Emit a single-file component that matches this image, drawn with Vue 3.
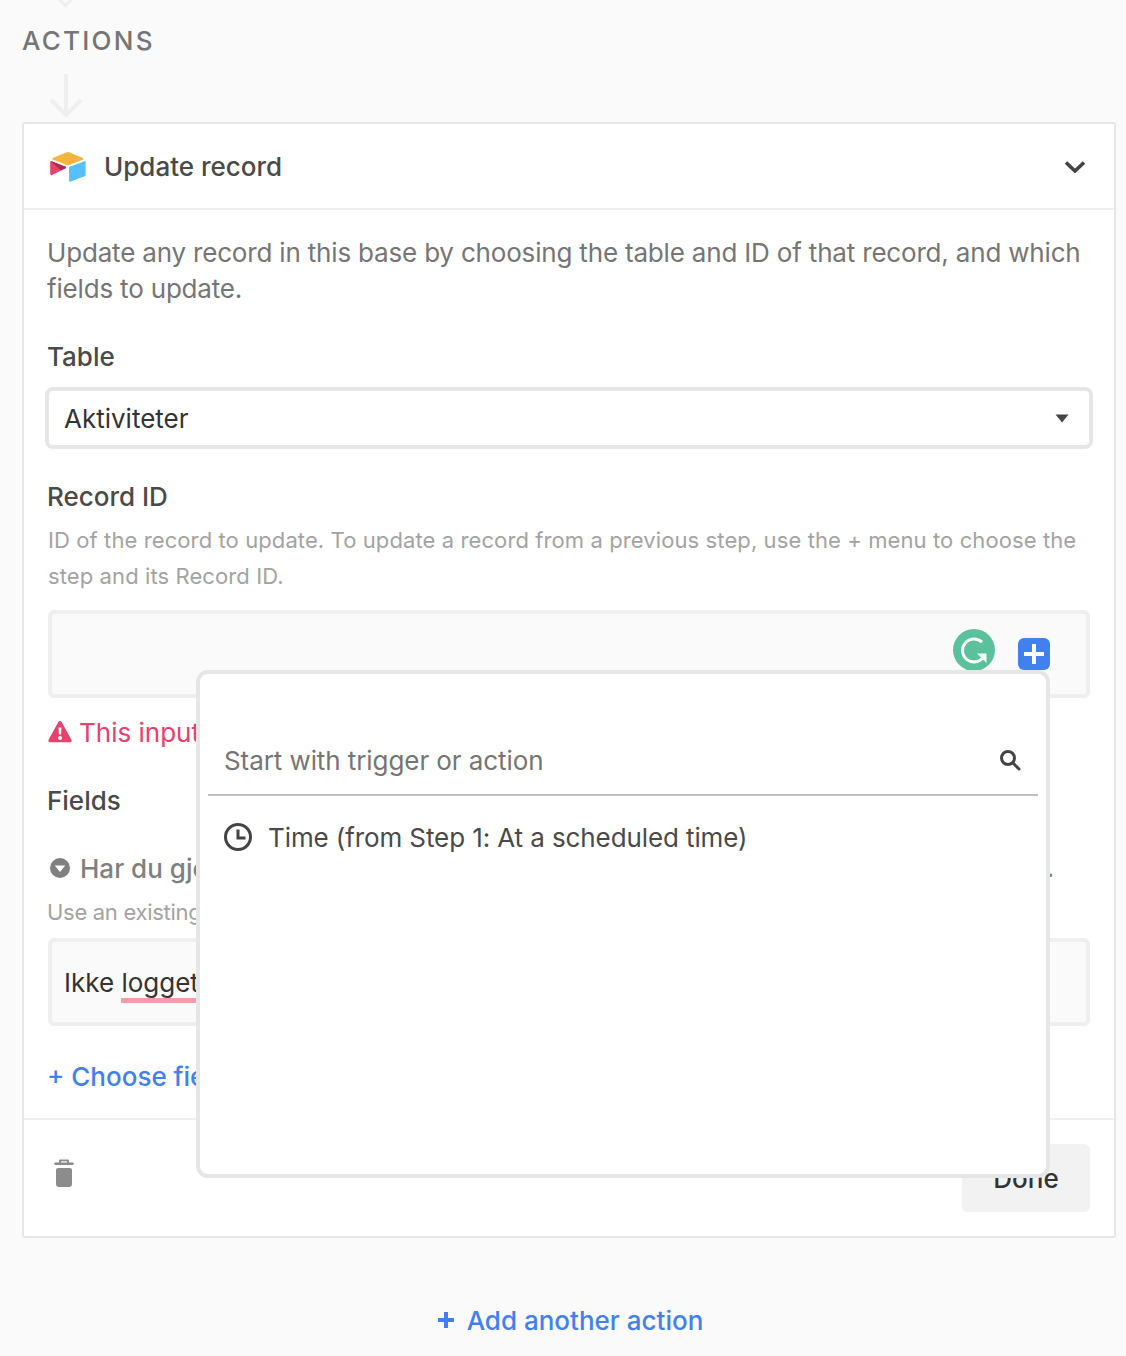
<script setup>
const helpText = 'ID of the record to update. To update a record from a previous step, use the + menu to choose the step and its Record ID.'
</script>

<template>
  <div class="page">
    <div class="stub"></div>
    <h2 class="section">ACTIONS</h2>
    <svg class="arrow" width="34" height="44" viewBox="0 0 34 44" fill="none" stroke="#efefef" stroke-width="4">
      <path d="M17 0V41M2 26L17 41L32 26" />
    </svg>

    <section class="card">
      <header class="card-head">
        <svg class="logo" width="40" height="34" viewBox="0 0 200 170">
          <path fill="#f4b43d" d="M90.039 12.368 24.079 39.66c-3.667 1.519-3.63 6.729.062 8.192l66.235 26.266a24.58 24.58 0 0 0 18.12 0l66.236-26.266c3.69-1.463 3.729-6.673.062-8.192l-65.96-27.292a24.58 24.58 0 0 0-18.795 0" />
          <path fill="#56c0ff" d="M105.312 88.46v65.617c0 3.12 3.147 5.258 6.048 4.108l73.806-28.648a4.42 4.42 0 0 0 2.79-4.108V59.813c0-3.121-3.147-5.258-6.048-4.108l-73.806 28.648a4.42 4.42 0 0 0-2.79 4.108" />
          <path fill="#e8416b" d="M88.078 91.846 17.712 125.651c-2.93 1.414-6.672-.722-6.672-3.978V60.088c0-1.178.604-2.195 1.414-2.96a5 5 0 0 1 1.12-.84c1.104-.663 2.68-.84 4.02-.31L87.71 83.76c3.564 1.413 3.844 6.408.368 8.087" />
          <path fill="#b02a4f" d="M88.078 91.846 65.358 102.818 13.574 56.288c1.104-.663 2.68-.84 4.02-.31L87.71 83.76c3.564 1.413 3.844 6.408.368 8.087" />
        </svg>
        <span class="card-title">Update record</span>
        <svg class="chev" width="22" height="14" viewBox="0 0 22 14" fill="none" stroke="#444" stroke-width="3.6">
          <path d="M2 3.500L11 12L20 3.500" />
        </svg>
      </header>

      <div class="card-body">
        <p class="desc">Update any record in this base by choosing the table and ID of that record, and which fields to update.</p>

        <div class="label table-label">Table</div>
        <div class="select">
          <span>Aktiviteter</span>
          <svg width="14" height="9" viewBox="0 0 14 9"><path fill="#444" d="M0.5 0.5H13.5L7 8.5Z" /></svg>
        </div>

        <div class="label record-label">Record ID</div>
        <p class="help">{{ helpText }}</p>
        <div class="input record-input"></div>

        <div class="error">
          <svg width="24" height="22" viewBox="0 0 24 22">
            <path fill="#e8416b" fill-rule="evenodd" d="M10.2 1.2a2 2 0 0 1 3.6 0l9.6 17.6a1.6 1.6 0 0 1-1.4 2.4H2a1.6 1.6 0 0 1-1.4-2.4ZM10.6 6.5l.3 7h2.2l.3-7ZM12 15a2 2 0 1 0 0 4 2 2 0 0 0 0-4Z" />
          </svg>
          <span>This input is required</span>
        </div>

        <div class="label fields-label">Fields</div>
        <div class="field-row">
          <svg width="22" height="22" viewBox="0 0 22 22">
            <circle cx="11" cy="11" r="10" fill="#808080" />
            <path fill="#fff" d="M5.8 8.5H16.2L11 15Z" />
          </svg>
          <span class="field-name">Har du gjort aktiviteten</span>
          <span class="field-dot">.</span>
        </div>
        <p class="help field-help">Use an existing option</p>
        <div class="input value-input"><span>Ikke <u class="spell">logget</u></span></div>
        <div class="choose">+ Choose field</div>
      </div>

      <footer class="card-foot">
        <svg width="20" height="28" viewBox="0 0 20 28">
          <path fill="#8c8c8c" d="M6 0.5H14a1 1 0 0 1 1 1V3.5H18.5a1.2 1.2 0 0 1 0 2.6H1.500a1.2 1.2 0 0 1 0-2.600H5V1.500a1 1 0 0 1 1-1ZM7 2.300V3.500H13V2.300ZM4 9H16a2 2 0 0 1 2 2V25a3 3 0 0 1-3 3H5a3 3 0 0 1-3-3V11a2 2 0 0 1 2-2Z" />
        </svg>
        <button class="done" type="button">Done</button>
      </footer>

      <svg class="grammarly" width="42" height="42" viewBox="0 0 42 42">
        <circle cx="21" cy="21" r="21" fill="#5ac19d" />
        <path fill="none" stroke="#fff" stroke-width="3" d="M29 13.200A11.500 11.500 0 1 0 30.500 28" />
        <path fill="#fff" d="M24 24.500H33.500V34Z" />
      </svg>
      <div class="plus-btn">
        <svg width="20" height="20" viewBox="0 0 20 20"><path stroke="#fff" stroke-width="4" d="M10 0V20M0 10H20" /></svg>
      </div>

      <div class="popover">
        <div class="search">
          <span>Start with trigger or action</span>
          <svg width="22" height="22" viewBox="0 0 22 22" fill="none" stroke="#444" stroke-width="3">
            <circle cx="9" cy="9" r="6.500" />
            <path d="M14 14L20 20" stroke-linecap="round" />
          </svg>
        </div>
        <div class="option">
          <svg width="30" height="30" viewBox="0 0 30 30" fill="none" stroke="#444">
            <circle cx="15" cy="15" r="12.500" stroke-width="3" />
            <path d="M15 7.500V16H22.500" stroke-width="3" />
          </svg>
          <span>Time (from Step 1: At a scheduled time)</span>
        </div>
      </div>
    </section>

    <div class="add-action">
      <svg width="18" height="18" viewBox="0 0 18 18"><path stroke="#4280f0" stroke-width="4" d="M9 1V17M1 9H17" /></svg>
      <span>Add another action</span>
    </div>
  </div>
</template>

<style scoped>
.page {
  position: relative;
  box-sizing: border-box;
  width: 1126px;
  height: 1356px;
  overflow: hidden;
  padding: 0 10px 0 22px;
  background: #fafafa;
  font-family: Inter, "Liberation Sans", sans-serif;
  font-size: 26px;
  color: #4a4a4a;
}
.stub {
  position: absolute;
  left: 59px;
  top: -8px;
  width: 10px;
  height: 10px;
  border-right: 3px solid #efefef;
  border-bottom: 3px solid #efefef;
  transform: rotate(45deg);
}
.section {
  margin: 0;
  padding-top: 23px;
  height: 36px;
  font-size: 26px;
  line-height: 36px;
  font-weight: 500;
  letter-spacing: 2.25px;
  color: #757575;
}
.arrow {
  display: block;
  margin: 15px 0 0 27px;
}
.card {
  position: relative;
  box-sizing: border-box;
  height: 1116px;
  margin-top: 4px;
  background: #fff;
  border: 2px solid #e6e6e6;
  border-radius: 3px;
}
.card-head {
  display: flex;
  align-items: center;
  box-sizing: border-box;
  height: 86px;
  padding: 0 28px 0 24px;
  border-bottom: 2px solid #f0f0f0;
}
.logo {
  margin: 2px 16px 0 0;
}
.card-title {
  flex: 1;
  font-weight: 500;
}
.card-body {
  padding: 25px 24px 0;
}
.desc,
.help {
  margin: 0;
}
.desc {
  margin-left: -1px;
  line-height: 36px;
  letter-spacing: -0.18px;
  color: #757575;
}
.label {
  margin-left: -1px;
  font-weight: 500;
  line-height: 36px;
}
.table-label {
  margin-top: 32px;
}
.select {
  display: flex;
  align-items: center;
  justify-content: space-between;
  box-sizing: border-box;
  height: 62px;
  margin: 12px -3px 0 -3px;
  padding: 0 20px 0 15px;
  background: #fff;
  border: 4px solid #e6e6e6;
  border-radius: 8px;
  color: #333;
}
.record-label {
  margin-top: 30px;
}
.help {
  margin-top: 7px;
  font-size: 22px;
  line-height: 36px;
  letter-spacing: 0.1px;
  color: #a3a3a3;
}
.input {
  box-sizing: border-box;
  height: 88px;
  background: #fafafa;
  border: 4px solid #efefef;
  border-radius: 6px;
}
.record-input {
  margin-top: 16px;
}
.error {
  display: flex;
  align-items: center;
  gap: 7px;
  height: 36px;
  margin-top: 16px;
  color: #e8416b;
}
.fields-label {
  margin-top: 33px;
}
.field-row {
  display: flex;
  align-items: center;
  gap: 9px;
  height: 36px;
  margin-top: 31px;
  padding-left: 1px;
  color: #808080;
  font-weight: 500;
}
.field-name {
  flex: 1;
}
.field-dot {
  margin-right: 36px;
  font-size: 24px;
}
.field-help {
  margin-top: 8px;
  margin-left: -1px;
  letter-spacing: -0.3px;
}
.value-input {
  display: flex;
  align-items: center;
  margin-top: 8px;
  padding-left: 12px;
  color: #333;
}
.spell {
  text-decoration: none;
  border-bottom: 5px solid #f49cad;
}
.choose {
  margin-top: 33px;
  margin-left: -1px;
  line-height: 36px;
  font-weight: 500;
  color: #4280f0;
}
.card-foot {
  position: absolute;
  left: 0;
  right: 0;
  top: 994px;
  display: flex;
  justify-content: space-between;
  align-items: flex-start;
  box-sizing: border-box;
  height: 118px;
  padding: 24px 24px 0 30px;
  border-top: 2px solid #f0f0f0;
}
.card-foot > svg {
  margin-top: 15px;
}
.done {
  width: 128px;
  height: 68px;
  border: 0;
  border-radius: 6px;
  background: #f2f2f2;
  color: #333;
  font: 500 26px Inter, "Liberation Sans", sans-serif;
}
.grammarly {
  position: absolute;
  left: 929px;
  top: 505px;
}
.plus-btn {
  position: absolute;
  left: 994px;
  top: 514px;
  display: flex;
  align-items: center;
  justify-content: center;
  width: 32px;
  height: 32px;
  background: #4280f0;
  border-radius: 6px;
}
.popover {
  position: absolute;
  left: 172px;
  top: 546px;
  box-sizing: border-box;
  width: 854px;
  height: 508px;
  padding: 0 8px;
  background: #fff;
  border: 4px solid #e6e6e6;
  border-radius: 12px;
}
.search {
  display: flex;
  align-items: center;
  justify-content: space-between;
  box-sizing: border-box;
  height: 122px;
  padding: 52px 17px 0 16px;
  border-bottom: 2px solid #bfbfbf;
  color: #757575;
  letter-spacing: -0.08px;
}
.option {
  display: flex;
  align-items: center;
  gap: 15px;
  height: 36px;
  margin-top: 23px;
  padding-left: 15px;
  letter-spacing: -0.1px;
}
.add-action {
  display: flex;
  align-items: center;
  justify-content: center;
  gap: 12px;
  height: 36px;
  margin: 64px 0 0 2px;
  font-weight: 500;
  color: #4280f0;
}
</style>

<style>
html, body { margin: 0; background: #fafafa; }
</style>
